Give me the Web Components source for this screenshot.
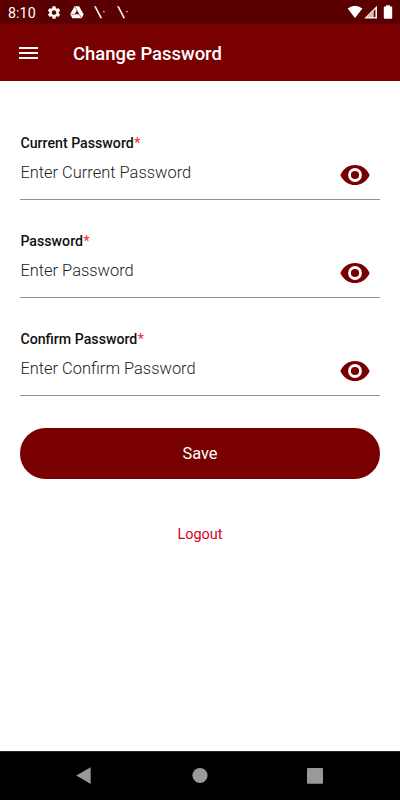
<!DOCTYPE html>
<html lang="en">
<head>
<meta charset="utf-8">
<title>Change Password</title>
<style>
html, body { margin: 0; height: 100%; background: #fff; overflow: hidden; }
body { font-family: Roboto, sans-serif; }
</style>
</head>
<body>
<app-screen></app-screen>
<script>
const define = (name, html) => customElements.define(name, class extends HTMLElement {
  constructor() {
    super();
    const t = document.createElement('template');
    t.innerHTML = html;
    this.attachShadow({ mode: 'open' }).append(t.content.cloneNode(true));
  }
});

define('status-bar', `
<style>
:host { display: flex; box-sizing: border-box; height: 24px; background: #5a0000; color: #fff; }
.time { font-size: 14.2px; line-height: 26px; padding-left: 8px; width: 37px; white-space: nowrap; letter-spacing: .1px; }
svg { display: block; width: 355px; height: 24px; flex: none; }
</style>
<div class="time">8:10</div>
<svg viewBox="45 0 355 24" fill="#fff">
  <path transform="translate(46.3 4.8) scale(.645)" d="M19.14 12.94c.04-.3.06-.61.06-.94 0-.32-.02-.64-.07-.94l2.03-1.58c.18-.14.23-.41.12-.61l-1.92-3.32c-.12-.22-.37-.29-.59-.22l-2.39.96c-.5-.38-1.03-.7-1.62-.94l-.36-2.54c-.04-.24-.24-.41-.48-.41h-3.84c-.24 0-.43.17-.47.41l-.36 2.54c-.59.24-1.13.57-1.62.94l-2.39-.96c-.22-.08-.47 0-.59.22L2.74 8.87c-.12.21-.08.47.12.61l2.03 1.58c-.05.3-.09.63-.09.94s.02.64.07.94l-2.03 1.58c-.18.14-.23.41-.12.61l1.92 3.32c.12.22.37.29.59.22l2.39-.96c.5.38 1.03.7 1.62.94l.36 2.54c.05.24.24.41.48.41h3.84c.24 0 .44-.17.47-.41l.36-2.54c.59-.24 1.13-.56 1.62-.94l2.39.96c.22.08.47 0 .59-.22l1.92-3.32c.12-.22.07-.47-.12-.61l-2.01-1.58zM12 15.6c-1.98 0-3.6-1.62-3.6-3.6s1.62-3.6 3.6-3.6 3.6 1.62 3.6 3.6-1.62 3.6-3.6 3.6z"/>
  <path d="M74.600 6.200h4.500l4.600 8-2.100 4h-9.200l-2.300-4zM77 10.200l-2.200 4h4.500z" fill-rule="evenodd"/>
  <path d="M74.800 6.500l2.400 4.200M70.500 14.300h5M79.300 14.300l2.200 3.800" stroke="#5a0000" stroke-width=".5"/>
  <path d="M94 6l2 .5 6 11.400-1.500.600zM103.300 11h1.200v1.200h-1.200z"/>
  <path d="M117 6l2 .5 6 11.400-1.500.600zM126.300 11h1.200v1.200h-1.200z"/>
  <path d="M347.600 8.500Q355 3.200 362.400 8.500L355 18z"/>
  <path fill-rule="evenodd" d="M377 5.800V18.400H364.200zM372.300 12.200L367.600 17H372.300zM373.600 11V17H375.400V9.200z" opacity=".94"/>
  <path d="M367.600 17L372.300 12.200V17z" opacity=".75"/>
  <path d="M386 5.300h4v1.100h1.400q.8 0 .8.8v10.600q0 .9-.9.9h-6.600q-.9 0-.9-.9V7.200q0-.8.8-.8H386z"/>
</svg>`);

define('app-bar', `
<style>
:host { display: flex; align-items: center; height: 57px; background: #780000; color: #fff; }
svg { display: block; margin-left: 19px; width: 19px; height: 14px; }
h1 { margin: 2px 0 0 35px; font-size: 18.450px; font-weight: 500; line-height: 24px; white-space: nowrap; }
</style>
<svg viewBox="0 0 19 14" fill="#fff"><path d="M0 1h19v2H0zM0 6h19v2H0zM0 11h19v2H0z"/></svg>
<h1><slot></slot></h1>`);

define('eye-icon', `
<style>
:host { display: block; width: 30px; height: 22px; }
svg { display: block; }
</style>
<svg width="30" height="22" viewBox="0 0 30 22" fill="#780000"><path fill-rule="evenodd" d="M15 .9C8.400.9 2.800 5 .4 11 2.800 17 8.400 21.100 15 21.100S27.200 17 29.600 11C27.200 5 21.600.9 15 .9zM15 17.900a6.900 6.900 0 1 1 0-13.800 6.900 6.900 0 0 1 0 13.800zM15 6.900a4.100 4.100 0 1 0 0 8.200 4.100 4.100 0 0 0 0-8.200z"/></svg>`);

define('password-field', `
<style>
:host { display: block; height: 98px; }
.label { font-size: 14.180px; font-weight: 500; line-height: 20px; color: #111; white-space: nowrap; }
.label i { font-style: normal; font-weight: 400; color: #f22; margin-left: .5px; }
.row { display: flex; justify-content: space-between; height: 47px; box-sizing: border-box; border-bottom: 1px solid #929292; padding-right: 9.500px; }
.hint { margin-top: 10px; font-size: 16.450px; line-height: 20px; color: #222; font-weight: 300; white-space: nowrap; }
eye-icon { margin-top: 11px; }
</style>
<div class="label"><slot></slot><i>*</i></div>
<div class="row"><span class="hint"><slot name="hint"></slot></span><eye-icon></eye-icon></div>`);

define('pill-button', `
<style>
:host { display: block; }
button { display: block; width: 100%; height: 50.600px; padding: 0; border: 0; border-radius: 25.300px; background: #780000; color: #fff; font: 400 16.400px/50px Roboto, sans-serif; padding-top: 1px; }
</style>
<button><slot></slot></button>`);

define('text-link', `
<style>
:host { display: block; text-align: center; font-size: 14.450px; line-height: 20px; color: #d9001b; }
</style>
<slot></slot>`);

define('nav-bar', `
<style>
:host { display: block; height: 49px; background: #000; }
svg { display: block; }
</style>
<svg width="400" height="49" viewBox="0 0 400 49" fill="#999">
  <path d="M0 0h400v.7H0z" fill="#333"/>
  <path d="M76.300 24.600L90.700 16.300V33z"/><circle cx="200" cy="24.500" r="7.600"/><rect x="307" y="17" width="16" height="15.800" rx="1"/>
</svg>`);

define('app-screen', `
<style>
:host { display: flex; flex-direction: column; width: 400px; height: 800px; background: #fff; }
main { flex: 1; padding: 52px 20.400px 0; min-height: 0; }
pill-button { margin-top: 1px; }
text-link { margin-top: 46.400px; }
</style>
<status-bar></status-bar>
<app-bar>Change Password</app-bar>
<main>
  <password-field>Current Password<span slot="hint">Enter Current Password</span></password-field>
  <password-field>Password<span slot="hint">Enter Password</span></password-field>
  <password-field>Confirm Password<span slot="hint">Enter Confirm Password</span></password-field>
  <pill-button>Save</pill-button>
  <text-link>Logout</text-link>
</main>
<nav-bar></nav-bar>`);
</script>
</body>
</html>
